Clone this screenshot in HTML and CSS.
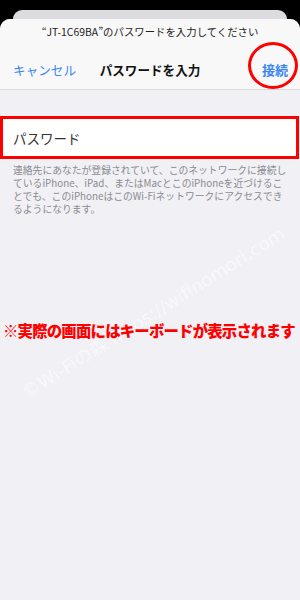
FILE: index.html
```html
<!DOCTYPE html>
<html lang="ja">
<head>
<meta charset="utf-8">
<link rel="stylesheet" href="styles.css">
</head>
<body>
<div class="screen">
  <div class="backcard"></div>
  <div class="sheet">
    <header class="head">
      <div class="prompt">“JT-1C69BA”のパスワードを入力してください</div>
      <div class="nav">
        <span class="cancel">キャンセル</span>
        <span class="title">パスワードを入力</span>
        <span class="join">接続<span class="ring"></span></span>
      </div>
    </header>
    <main class="body">
      <div class="mark">©Wi-Fiの森 https://wifinomori.com</div>
      <div class="field">パスワード</div>
      <p class="desc">連絡先にあなたが登録されていて、このネットワークに接続し<br>ているiPhone、iPad、またはMacとこのiPhoneを近づけるこ<br>とでも、このiPhoneはこのWi-Fiネットワークにアクセスでき<br>るようになります。</p>
      <p class="note">※実際の画面にはキーボードが表示されます</p>
    </main>
  </div>
</div>
</body>
</html>
```
FILE: styles.css
```css
html, body {
  margin: 0;
  padding: 0;
  background: #000;
  width: 300px;
  height: 600px;
  overflow: hidden;
  font-family: "Noto Sans CJK JP", "Noto Sans", sans-serif;
}
.screen {
  padding-top: 10px;
  height: 590px;
  display: flex;
  flex-direction: column;
}
.backcard {
  height: 9px;
  margin: 0 13px;
  background: #dcdce0;
  border-radius: 10px 10px 0 0;
}
.sheet {
  flex: 1;
  display: flex;
  flex-direction: column;
  border-radius: 10px 10px 0 0;
  overflow: hidden;
  background: #f0f0f5;
}
.head {
  height: 71px;
  box-sizing: border-box;
  background: #f8f8f8;
  border-bottom: 1px solid #dcdcdf;
  padding-top: 5px;
}
.prompt {
  text-align: center;
  font-size: 10.4px;
  line-height: 16px;
  color: #222;
}
.nav {
  position: relative;
  display: flex;
  justify-content: space-between;
  align-items: center;
  padding: 0 12px 0 13px;
  margin-top: 19px;
  height: 20px;
  font-size: 12.6px;
}
.cancel { color: #3a86f4; }
.title {
  position: absolute;
  left: 0;
  right: 0;
  text-align: center;
  font-weight: 700;
  color: #111;
  pointer-events: none;
}
.join {
  position: relative;
  color: #3a86f4;
  font-weight: 700;
  font-size: 13px;
}
.ring {
  position: absolute;
  left: -14px;
  top: -18px;
  width: 44px;
  height: 41px;
  border: 3px solid #ff0000;
  border-radius: 50%;
}
.body {
  position: relative;
  flex: 1;
  padding-top: 26px;
}
.field {
  position: relative;
  height: 37px;
  margin-right: 1px;
  border: 3px solid #ff0000;
  background: #fff;
  padding-left: 10px;
  display: flex;
  align-items: center;
  font-size: 13.5px;
  color: #333;
}
.desc {
  position: relative;
  margin: 5px 0 0;
  padding-left: 13px;
  font-size: 9.8px;
  line-height: 13px;
  color: #8b8b90;
  white-space: nowrap;
}
.note {
  position: relative;
  margin: 104px 0 0;
  padding-left: 3px;
  font-size: 15.4px;
  line-height: 20px;
  font-weight: 900;
  letter-spacing: -0.8px;
  color: #ff0000;
  white-space: nowrap;
}
.mark {
  position: absolute;
  left: 0;
  top: 210px;
  width: 300px;
  text-align: center;
  font-family: "DejaVu Sans", "Noto Sans CJK JP", sans-serif;
  font-size: 18px;
  color: rgba(255, 255, 255, 0.6);
  transform: rotate(-32deg);
  white-space: nowrap;
  pointer-events: none;
}
```
